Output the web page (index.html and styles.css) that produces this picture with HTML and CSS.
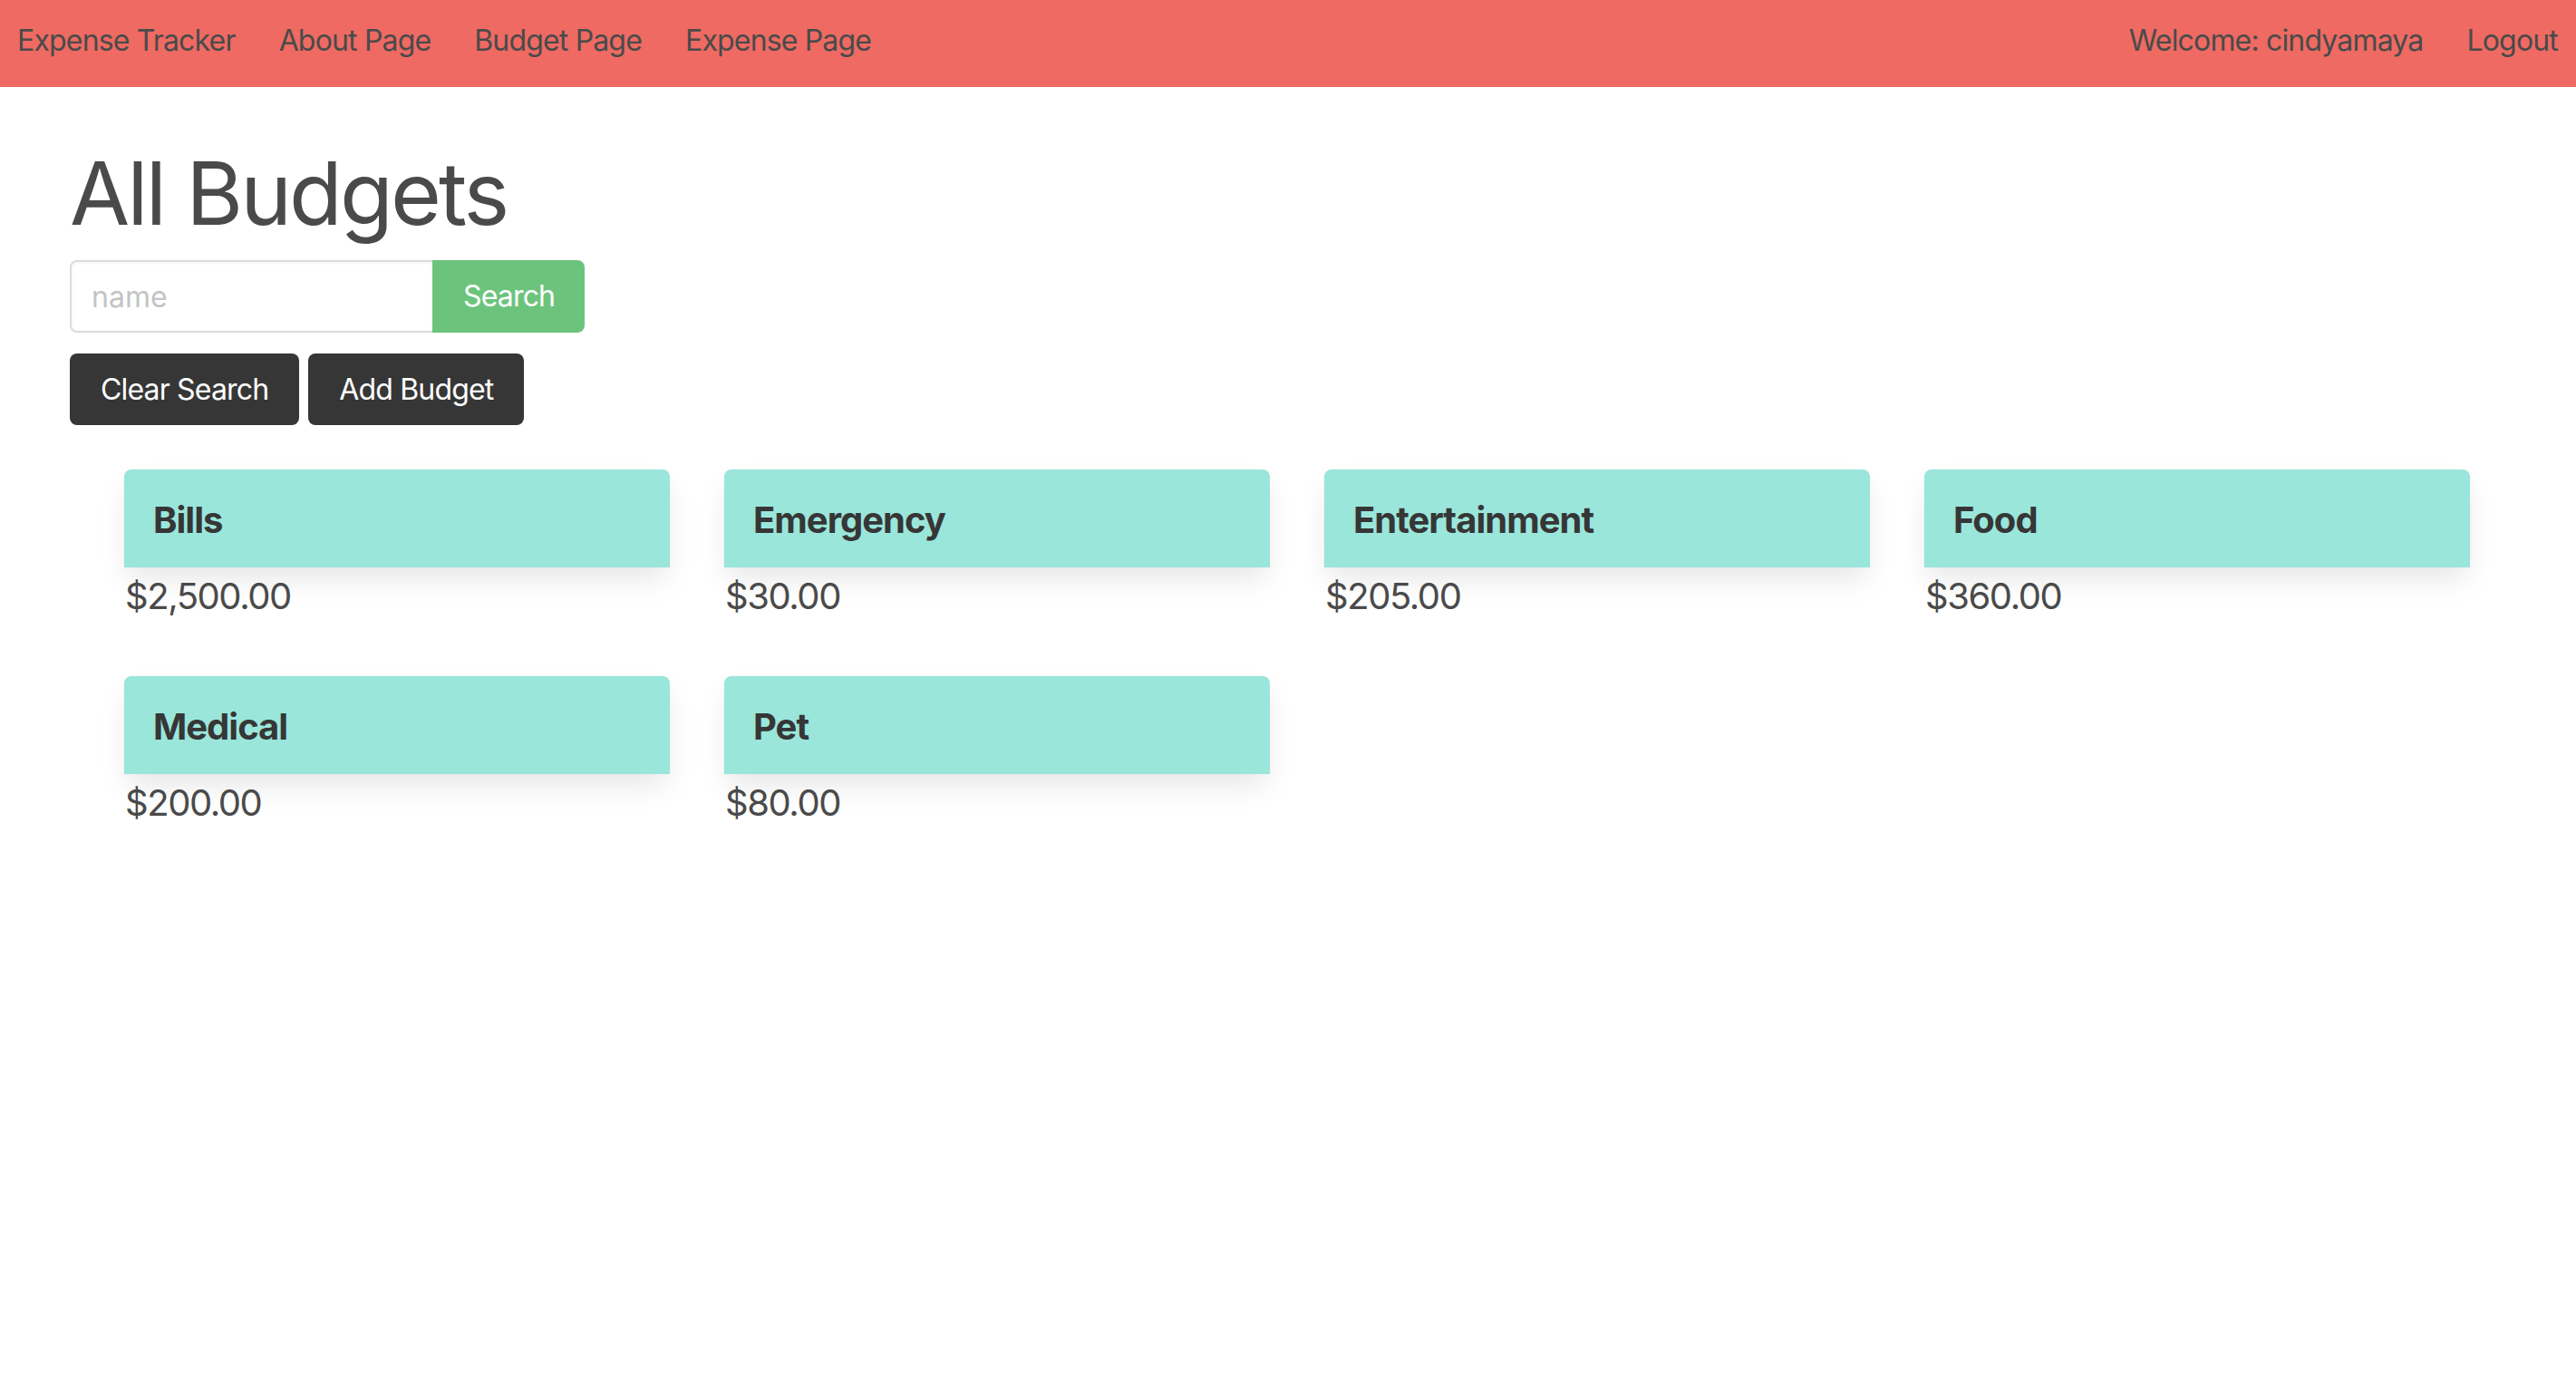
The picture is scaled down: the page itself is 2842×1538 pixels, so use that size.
FILE: index.html
```html
<!DOCTYPE html>
<html lang="en">
<head>
<meta charset="utf-8">
<title>Expense Tracker - All Budgets</title>
<link rel="stylesheet" href="styles.css">
</head>
<body>
<nav class="navbar">
  <div class="nav-start">
    <a class="nav-item brand" href="#">Expense Tracker</a>
    <a class="nav-item" href="#">About Page</a>
    <a class="nav-item" href="#">Budget Page</a>
    <a class="nav-item" href="#">Expense Page</a>
  </div>
  <div class="nav-end">
    <span class="nav-item">Welcome: cindyamaya</span>
    <a class="nav-item last" href="#">Logout</a>
  </div>
</nav>
<main class="page">
  <h1 class="title">All Budgets</h1>
  <form class="search">
    <input class="search-input" type="text" placeholder="name">
    <button class="btn btn-success" type="button">Search</button>
  </form>
  <div class="actions">
    <button class="btn btn-dark" type="button">Clear Search</button>
    <button class="btn btn-dark" type="button">Add Budget</button>
  </div>
  <div class="budget-grid">
    <div class="budget"><div class="budget-header">Bills</div><p class="amount">$2,500.00</p></div>
    <div class="budget"><div class="budget-header">Emergency</div><p class="amount">$30.00</p></div>
    <div class="budget"><div class="budget-header">Entertainment</div><p class="amount">$205.00</p></div>
    <div class="budget"><div class="budget-header">Food</div><p class="amount">$360.00</p></div>
    <div class="budget"><div class="budget-header">Medical</div><p class="amount">$200.00</p></div>
    <div class="budget"><div class="budget-header">Pet</div><p class="amount">$80.00</p></div>
  </div>
</main>
</body>
</html>
```
FILE: styles.css
```css
* { box-sizing: border-box; }
html, body { margin: 0; padding: 0; background: #fff; }
body {
  font-family: Inter, "Noto Sans", "Liberation Sans", sans-serif;
  font-size: 32px;
  line-height: 1.5;
  color: #4a4a4a;
  letter-spacing: -0.026em;
}
.navbar {
  height: 96px;
  background: #ee6a62;
  display: flex;
  align-items: center;
  justify-content: space-between;
  padding: 0 0 7px 0;
}
.nav-start, .nav-end { display: flex; align-items: center; }
.nav-item {
  color: #4a4a4a;
  text-decoration: none;
  padding: 0 24px;
  line-height: 48px;
}
.nav-item.brand { padding-left: 19px; }
.nav-item.last { padding-right: 20px; }
.page { padding: 63px 77px 0; }
.title {
  margin: 0;
  font-size: 96px;
  font-weight: 400;
  line-height: 1.125;
  color: #4a4a4a;
  letter-spacing: -0.03em;
}
.search { display: flex; margin-top: 20px; }
.search-input {
  width: 400px;
  height: 80px;
  border: 2px solid #dbdbdb;
  border-right: none;
  border-radius: 8px 0 0 8px;
  box-shadow: inset 0 1px 4px rgba(10, 10, 10, 0.05);
  padding: 0 22px;
  font: inherit;
  color: #363636;
  outline: none;
}
.search-input::placeholder { color: #c4c4c4; }
.btn {
  height: 80px;
  padding: 0 32px;
  border: 2px solid transparent;
  border-radius: 8px;
  font: inherit;
  letter-spacing: inherit;
  cursor: pointer;
}
.btn-success {
  background: #6cc47c;
  color: #fff;
  border-radius: 0 8px 8px 0;
  width: 168px;
}
.btn-dark { background: #363636; color: #fff; }
.actions { display: flex; gap: 10px; margin-top: 23px; }
.actions .btn { height: 79px; }
.budget-grid {
  display: grid;
  grid-template-columns: repeat(4, 602px);
  column-gap: 60px;
  row-gap: 58px;
  margin: 49px 0 0 60px;
}
.budget-header {
  background: #9ae6db;
  color: #363636;
  font-size: 40px;
  font-weight: 700;
  line-height: 60px;
  padding: 26px 32px 22px;
  border-radius: 8px 8px 0 0;
  letter-spacing: -0.025em;
  box-shadow: 0 16px 32px -4px rgba(10, 10, 10, 0.1), 0 0 0 1px rgba(10, 10, 10, 0.02);
}
.amount {
  margin: 0;
  font-size: 40px;
  line-height: 60px;
  color: #4a4a4a;
  padding: 2px 0 0 1px;
  letter-spacing: -0.036em;
}
```
